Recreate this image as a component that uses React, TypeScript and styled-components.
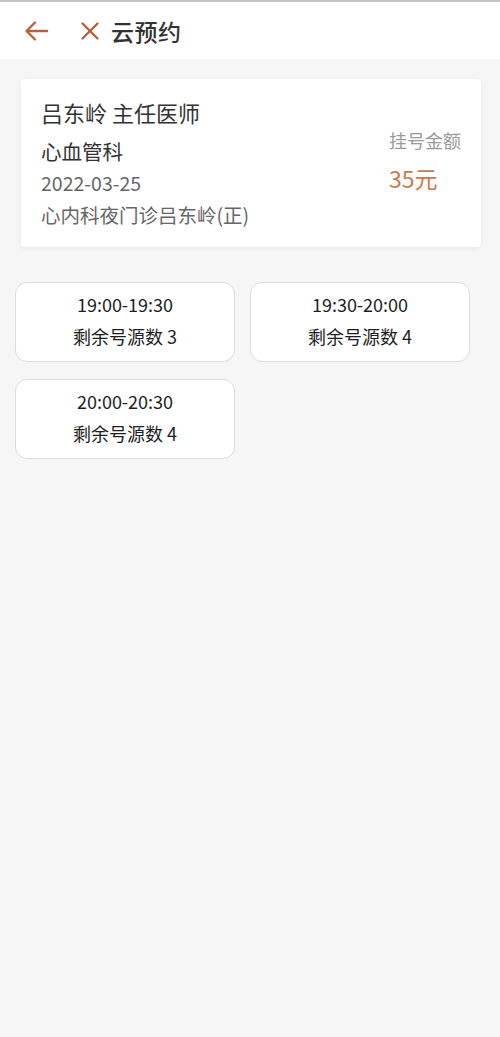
import React from 'react';
import styled, { createGlobalStyle } from 'styled-components';

const GlobalStyle = createGlobalStyle`
  html, body {
    margin: 0;
    padding: 0;
    background: #f6f6f6;
  }
  body {
    font-family: 'Noto Sans CJK SC', 'Noto Sans', sans-serif;
    -webkit-font-smoothing: antialiased;
  }
`;

const Page = styled.div`
  width: 500px;
  min-height: 1037px;
  background: #f6f6f6;
  border-top: 2px solid #c6c6c6;
  box-sizing: border-box;
`;

const Header = styled.div`
  height: 57px;
  background: #fff;
  display: flex;
  align-items: center;
  padding-left: 24px;
  box-sizing: border-box;
`;

const IconButton = styled.button<{ $gap?: number }>`
  border: none;
  background: none;
  padding: 0;
  margin-right: ${(p) => p.$gap ?? 0}px;
  display: flex;
  align-items: center;
  color: #b4643a;
  cursor: pointer;
`;

const Title = styled.h1`
  margin: 0;
  font-size: 23px;
  font-weight: 500;
  color: #333;
  letter-spacing: 0.5px;
`;

const Card = styled.div`
  margin: 20px 19px 0 21px;
  background: #fff;
  border-radius: 4px;
  box-shadow: 0 1px 6px rgba(0, 0, 0, 0.06);
  padding: 18px 20px 16px 20px;
  display: flex;
  justify-content: space-between;
  align-items: center;
`;

const DoctorInfo = styled.div`
  display: flex;
  flex-direction: column;
`;

const Line = styled.div<{ $size: number; $color: string; $top?: number }>`
  font-size: ${(p) => p.$size}px;
  line-height: ${(p) => (p.$size > 21 ? 30 : 32)}px;
  color: ${(p) => p.$color};
  margin-top: ${(p) => p.$top ?? 0}px;
  white-space: nowrap;
`;

const Fee = styled.div`
  display: flex;
  flex-direction: column;
  gap: 10px;
  margin-bottom: 10px;
`;

const FeeLabel = styled.div`
  font-size: 18px;
  line-height: 28px;
  color: #9a9a9a;
`;

const FeeValue = styled.div`
  font-size: 23px;
  line-height: 28px;
  color: #c77b4c;
`;

const SlotGrid = styled.div`
  display: grid;
  grid-template-columns: 220px 220px;
  column-gap: 15px;
  row-gap: 17px;
  padding: 35px 0 0 15px;
`;

const Slot = styled.div`
  height: 80px;
  box-sizing: border-box;
  background: #fff;
  border: 1px solid #dcdcdc;
  border-radius: 12px;
  display: flex;
  flex-direction: column;
  align-items: center;
  padding-top: 5px;
  color: #1e1e1e;
  font-size: 18px;
  line-height: 32px;
  cursor: pointer;
`;

const slots = [
  { time: '19:00-19:30', left: 3 },
  { time: '19:30-20:00', left: 4 },
  { time: '20:00-20:30', left: 4 },
];

export default function App() {
  return (
    <Page>
      <GlobalStyle />
      <Header>
        <IconButton $gap={31} aria-label="返回">
          <svg width="25" height="22" viewBox="0 0 25 22" fill="none" stroke="currentColor" strokeWidth="2.4" strokeLinecap="round" strokeLinejoin="round">
            <path d="M23 11H3" />
            <path d="M11 2.5L2.5 11L11 19.5" />
          </svg>
        </IconButton>
        <IconButton $gap={11} aria-label="关闭">
          <svg width="20" height="20" viewBox="0 0 20 20" fill="none" stroke="currentColor" strokeWidth="2.4" strokeLinecap="round">
            <path d="M2.5 2.5L17.5 17.5" />
            <path d="M17.5 2.5L2.5 17.5" />
          </svg>
        </IconButton>
        <Title>云预约</Title>
      </Header>

      <Card>
        <DoctorInfo>
          <Line $size={22} $color="#333">吕东岭 主任医师</Line>
          <Line $size={20.5} $color="#333" $top={8}>心血管科</Line>
          <Line $size={19.5} $color="#666">2022-03-25</Line>
          <Line $size={19.5} $color="#666">心内科夜门诊吕东岭(正)</Line>
        </DoctorInfo>
        <Fee>
          <FeeLabel>挂号金额</FeeLabel>
          <FeeValue>35元</FeeValue>
        </Fee>
      </Card>

      <SlotGrid>
        {slots.map((s) => (
          <Slot key={s.time}>
            <div>{s.time}</div>
            <div>剩余号源数 {s.left}</div>
          </Slot>
        ))}
      </SlotGrid>
    </Page>
  );
}
